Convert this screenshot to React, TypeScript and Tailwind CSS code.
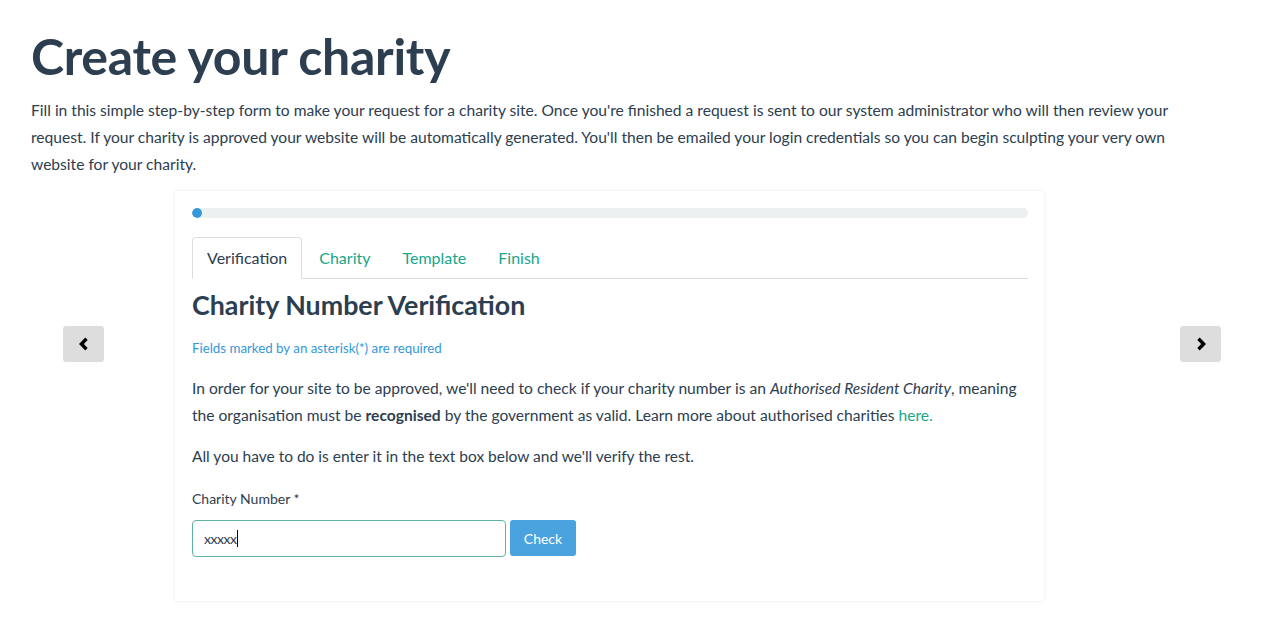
import React from "react";

function Chevron({ dir }: { dir: "left" | "right" }) {
  return (
    <svg width="12" height="14" viewBox="0 0 12 14" aria-hidden>
      {dir === "left" ? (
        <path d="M8.5 1.8 L3.4 7 L8.5 12.2" fill="none" stroke="#000" strokeWidth="3.4" strokeLinecap="butt" strokeLinejoin="miter" />
      ) : (
        <path d="M3.5 1.8 L8.6 7 L3.5 12.2" fill="none" stroke="#000" strokeWidth="3.4" strokeLinecap="butt" strokeLinejoin="miter" />
      )}
    </svg>
  );
}

export default function App() {
  return (
    <div className="min-h-screen bg-white text-[#2c3e50]" style={{ fontFamily: "Lato, 'Open Sans', sans-serif" }}>
      <div className="px-[31px] pt-[30px]">
        <h1 className="text-[50px] font-bold leading-[53px] tracking-[-0.3px]">Create your charity</h1>
        <p className="mt-[14px] text-[15.6px] leading-[27px] pr-[60px]">
          Fill in this simple step-by-step form to make your request for a charity site. Once you're finished a request is sent to our system administrator who will then review your request. If your charity is approved your website will be automatically generated. You'll then be emailed your login credentials so you can begin sculpting your very own website for your charity.
        </p>
        <div className="mt-[13px] flex items-start">
          <div className="w-[144px] shrink-0">
            <button className="ml-[32px] mt-[135px] flex h-[36px] w-[41px] items-center justify-center rounded-[3px] bg-[#dddddd]">
              <Chevron dir="left" />
            </button>
          </div>
          <div className="w-[869px] shrink-0 rounded-[3px] bg-white px-[17px] pb-[44px] pt-[17px] shadow-[0_0_4px_rgba(0,0,0,0.08)]">
            <div className="h-[10px] w-[836px] overflow-hidden rounded-full bg-[#ecf0f1]">
              <div className="h-full w-[10px] rounded-full bg-[#3498db]" />
            </div>
            <div className="mt-[19px] flex w-[836px] border-b border-[#dddddd] text-[16px]">
              <div className="-mb-px mr-[2px] rounded-t-[4px] border border-[#dddddd] border-b-white bg-white px-[14px] leading-[40px] text-[#2c3e50]">Verification</div>
              <div className="mr-[2px] px-[15px] leading-[41px] text-[#18a689]">Charity</div>
              <div className="mr-[2px] px-[15px] leading-[41px] text-[#18a689]">Template</div>
              <div className="mr-[2px] px-[15px] leading-[41px] text-[#18a689]">Finish</div>
            </div>
            <h2 className="mt-[11px] text-[26.8px] font-bold leading-[30px]">Charity Number Verification</h2>
            <p className="mt-[19px] text-[13.3px] leading-[18px] text-[#3498db]">Fields marked by an asterisk(*) are required</p>
            <p className="mt-[18px] text-[15.6px] leading-[27px]">
              In order for your site to be approved, we'll need to check if your charity number is an <em>Authorised Resident Charity</em>, meaning the organisation must be <strong>recognised</strong> by the government as valid. Learn more about authorised charities <span className="text-[#18a689]">here.</span>
            </p>
            <p className="mt-[14px] text-[15.5px] leading-[27px]">All you have to do is enter it in the text box below and we'll verify the rest.</p>
            <div className="mt-[19px] text-[14px] leading-[20px]">Charity Number *</div>
            <div className="mt-[11px] flex items-start gap-[4px]">
              <div className="flex h-[37px] w-[314px] items-center rounded-[4px] border border-[#5fb3a3] px-[11px] text-[14px] text-[#2c3e50]">
                <span className="tracking-[-0.5px]">xxxxx</span>
                <span className="ml-[1px] inline-block h-[17px] w-px bg-black" />
              </div>
              <button className="h-[36px] w-[66px] rounded-[3px] bg-[#4aa3df] text-[14px] text-white">Check</button>
            </div>
          </div>
          <div className="flex-1">
            <button className="ml-[136px] mt-[135px] flex h-[36px] w-[41px] items-center justify-center rounded-[3px] bg-[#dddddd]">
              <Chevron dir="right" />
            </button>
          </div>
        </div>
      </div>
    </div>
  );
}
